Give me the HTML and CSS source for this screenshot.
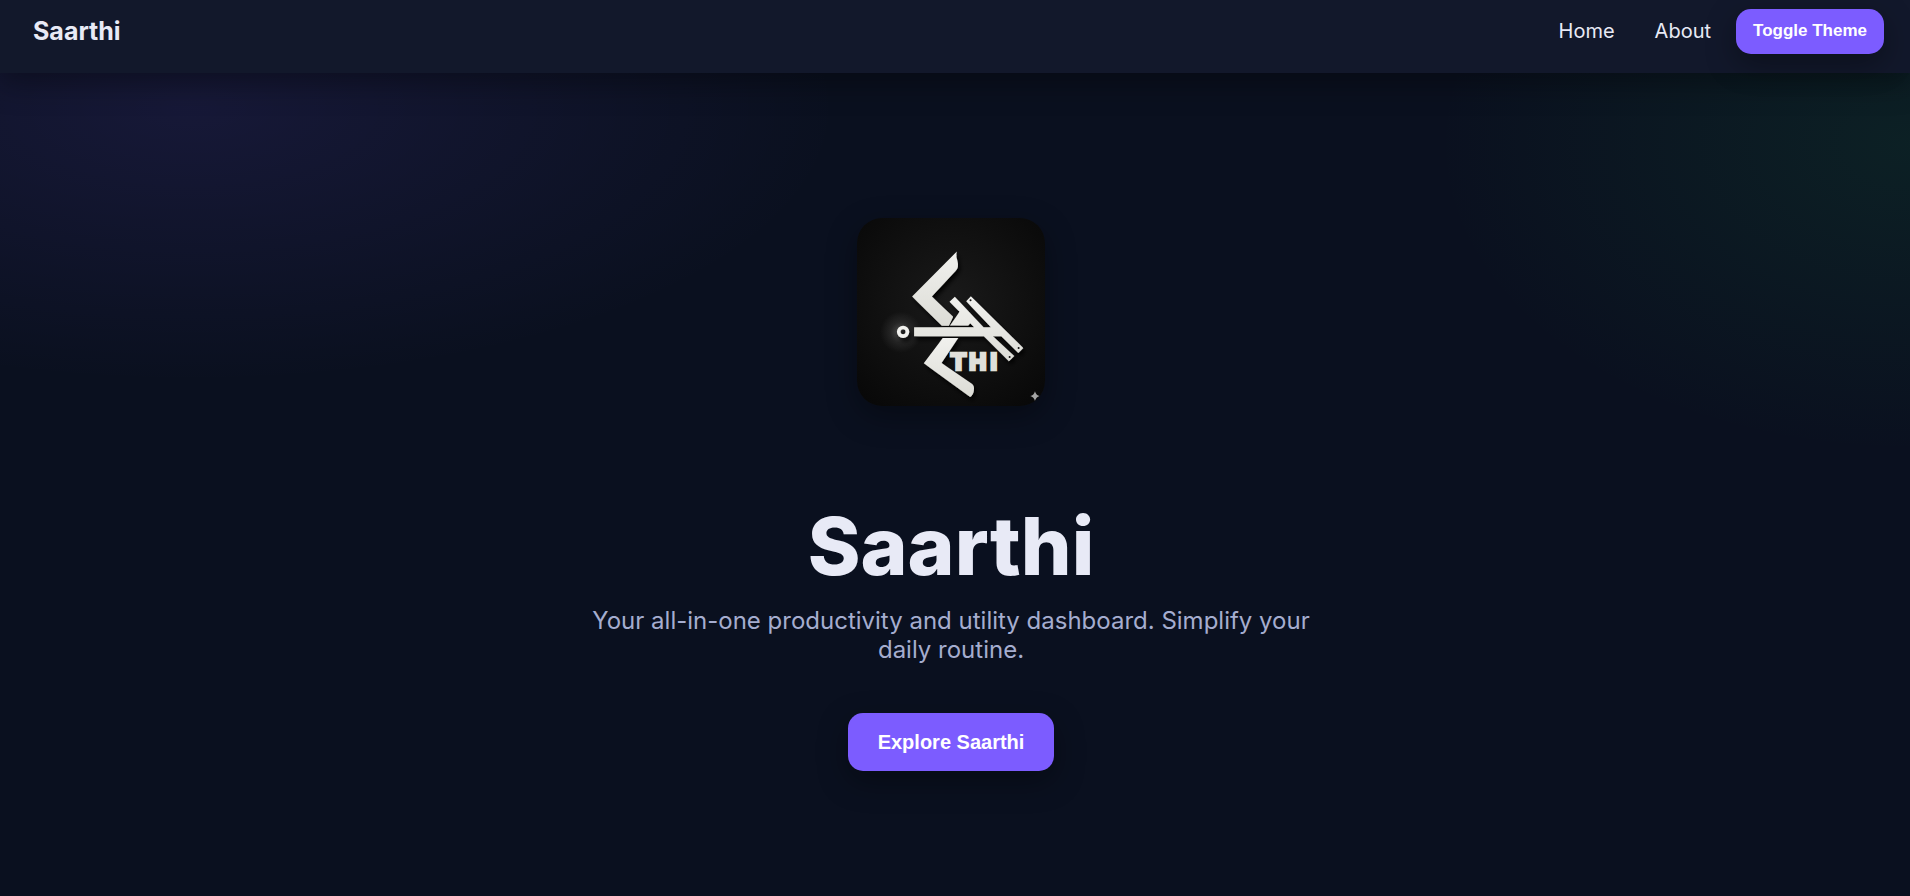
FILE: index.html
```
<!DOCTYPE html>
<html lang="en">
  <head>
    <meta charset="utf-8" />
    <meta name="viewport" content="width=device-width, initial-scale=1" />
    <title>Saarthi</title>
    <link rel="stylesheet" href="styles.css">
  </head>

  <body>
    <nav class="navbar">
      <div class="brand">Saarthi</div>
      <div class="nav-links">
        <a href="#">Home</a>
        <a href="#">About</a>
        <button type="button" class="btn btn-theme">Toggle Theme</button>
      </div>
    </nav>

    <main class="hero">
      <svg class="hero-logo" viewBox="51 54 563 563" role="img" aria-label="Saarthi logo">
        <defs>
          <radialGradient id="tile" cx="50%" cy="45%" r="70%">
            <stop offset="0" stop-color="#1a1a1a" />
            <stop offset="1" stop-color="#080808" />
          </radialGradient>
          <radialGradient id="glow">
            <stop offset="0" stop-color="#fff" stop-opacity=".25" />
            <stop offset=".5" stop-color="#fff" stop-opacity=".08" />
            <stop offset="1" stop-color="#fff" stop-opacity="0" />
          </radialGradient>
          <linearGradient id="metal" x1="0" y1="0" x2="0" y2="1">
            <stop offset="0" stop-color="#f1f1ee" />
            <stop offset="1" stop-color="#dcdcd6" />
          </linearGradient>
          <filter id="drop" x="-20%" y="-20%" width="150%" height="150%">
            <feDropShadow dx="6" dy="10" stdDeviation="6" flood-color="#000" flood-opacity=".9" />
          </filter>
        </defs>
        <rect x="51" y="54" width="563" height="563" fill="url(#tile)" />
        <circle cx="182" cy="396" r="62" fill="url(#glow)" />
        <g filter="url(#drop)" fill="url(#metal)">
          <!-- upper and lower strokes of the S -->
          <path d="M350 154 Q347 170 352 184 Q357 201 346 213 L275 289 L339 350 L326 377 L305 377 L216 289 Z" />
          <path d="M308 413 L354 413 L304 488 L396 551 Q403 557 401 570 Q400 583 390 590 L251 489 Z" />
          <!-- arrow and bars -->
          <path d="M344 290 L430 381 L452 381 L378 303 L392 288 L549 443 L534 458 L483 408 L458 408 L522 467 L506 483 L431 408 L222 408 L222 381 L402 381 L390 369 L384 376 L330 376 L358 335 L328 305 Z" />
          <circle cx="189" cy="395" r="13" fill="none" stroke="#f1f1ee" stroke-width="11" />
        </g>
        <g fill="#111">
          <circle cx="391" cy="300" r="3" />
          <circle cx="535" cy="443" r="3" />
          <circle cx="508" cy="470" r="3" />
        </g>
        <text class="logo-text" x="332 384 448" y="510">THI</text>
        <path fill="#a5a5a5" d="M584 573 Q587 585 598 587 Q587 590 584 602 Q581 590 570 587 Q581 585 584 573 Z" />
      </svg>
      <h1>Saarthi</h1>
      <p class="tagline">Your all-in-one productivity and utility dashboard. Simplify your daily routine.</p>
      <button type="button" class="btn btn-explore">Explore Saarthi</button>
    </main>
  </body>
</html>
```
FILE: styles.css
```
* {
  box-sizing: border-box;
}

body {
  margin: 0;
  min-height: 100vh;
  display: flex;
  flex-direction: column;
  color: #e8eaf6;
  font-family: Inter, sans-serif;
  background:
    radial-gradient(1300px 550px at 10% 12%, rgba(124, 92, 255, 0.11), transparent 50%),
    radial-gradient(950px 620px at 100% 16%, rgba(34, 197, 94, 0.09), transparent 50%),
    #0a101f;
}

.navbar {
  display: flex;
  justify-content: space-between;
  align-items: flex-start;
  height: 73px;
  padding: 9px 26px 0 33px;
  background: #12182b;
  box-shadow: 0 10px 30px rgba(0, 0, 0, 0.35);
}

.brand {
  font-size: 25px;
  font-weight: 700;
  line-height: 44px;
}

.nav-links {
  display: flex;
  align-items: center;
}

.nav-links a {
  margin-right: 40px;
  color: inherit;
  font-size: 20px;
  line-height: 24px;
  padding-bottom: 2px;
  text-decoration: none;
}

.nav-links a:last-of-type {
  margin-right: 25px;
}

.btn {
  border: none;
  border-radius: 15px;
  color: #fff;
  background: #7c5cff;
  box-shadow: 0 10px 30px rgba(0, 0, 0, 0.35);
  font-family: "Liberation Sans", Arial, sans-serif;
  font-weight: 700;
  cursor: pointer;
}

.btn-theme {
  height: 45px;
  padding: 0 17px 2px;
  font-size: 17px;
}

.hero {
  flex: 1;
  display: flex;
  flex-direction: column;
  align-items: center;
  padding: 145px 8px 0 0;
  text-align: center;
}

.hero-logo {
  width: 188px;
  height: 188px;
  border-radius: 25px;
  box-shadow: 0 10px 30px rgba(0, 0, 0, 0.35);
}

.logo-text {
  fill: #e0e0da;
  stroke: #e0e0da;
  stroke-width: 7px;
  font-family: "DejaVu Sans", sans-serif;
  font-size: 68px;
  font-weight: 700;
}

h1 {
  margin: 92px 0 0;
  font-size: 80px;
  font-weight: 800;
  line-height: 96px;
}

.tagline {
  max-width: 750px;
  margin: 12px 0 49px;
  color: #a5adcf;
  font-size: 24px;
  line-height: 29px;
}

.btn-explore {
  height: 58px;
  padding: 0 30px;
  font-size: 20px;
}
```
